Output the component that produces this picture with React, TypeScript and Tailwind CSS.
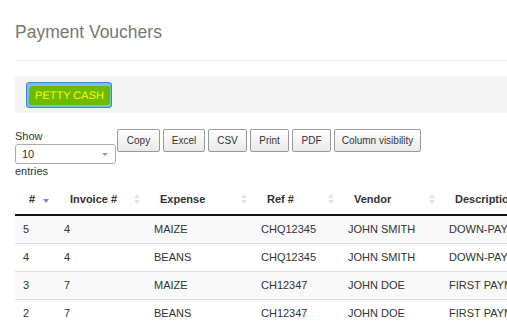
const rows = [
  { id: "5", invoice: "4", expense: "MAIZE", ref: "CHQ12345", vendor: "JOHN SMITH", desc: "DOWN-PAYMENT" },
  { id: "4", invoice: "4", expense: "BEANS", ref: "CHQ12345", vendor: "JOHN SMITH", desc: "DOWN-PAYMENT" },
  { id: "3", invoice: "7", expense: "MAIZE", ref: "CH12347", vendor: "JOHN DOE", desc: "FIRST PAYMENT" },
  { id: "2", invoice: "7", expense: "BEANS", ref: "CH12347", vendor: "JOHN DOE", desc: "FIRST PAYMENT" },
];

const columns = [
  { label: "#", width: "w-[41px]", active: true },
  { label: "Invoice #", width: "w-[90px]" },
  { label: "Expense", width: "w-[107px]" },
  { label: "Ref #", width: "w-[87px]" },
  { label: "Vendor", width: "w-[101px]" },
  { label: "Description", width: "w-[140px]" },
];

const exportButtons = [
  { label: "Copy", width: "w-[43px]" },
  { label: "Excel", width: "w-[42px]" },
  { label: "CSV", width: "w-[39px]" },
  { label: "Print", width: "w-[39px]" },
  { label: "PDF", width: "w-[39px]" },
  { label: "Column visibility", width: "w-[87px]" },
];

function SortIcon({ active }: { active?: boolean }) {
  if (active) {
    return (
      <svg width="6" height="4" viewBox="0 0 6 4" className="absolute right-[7px] top-[14px]">
        <path d="M0 0h6L3 4z" fill="#8088d8" />
      </svg>
    );
  }
  return (
    <svg width="6" height="10" viewBox="0 0 6 10" className="absolute right-[6px] top-[9px]">
      <path d="M0 4L3 0l3 4z" fill="#e2e2e2" />
      <path d="M0 6h6l-3 4z" fill="#e2e2e2" />
    </svg>
  );
}

export default function App() {
  return (
    <div className="w-[507px] h-[321px] overflow-hidden bg-white font-['Liberation_Sans',Arial,sans-serif] text-[#333]">
      <div className="pl-[15px]">
        {/* Title */}
        <h1 className="pt-[22px] text-[17.5px] leading-[20px] text-[#777]">Payment Vouchers</h1>
        <div className="mt-[18px] h-px bg-[#eee]" />

        {/* Action panel */}
        <div className="mt-[15px] h-[37px] bg-[#f4f4f4] pt-[6px] pl-[11px]">
          <button className="flex h-[26px] w-[86px] items-center justify-center rounded-[3px] border border-[#3c86c9] bg-[#74bfee]">
            <span className="rounded-[3px] bg-[#6cbb02] px-[6px] py-[3px] text-[11px] leading-[13px] text-[#f8f800] -skew-x-3">
              PETTY CASH
            </span>
          </button>
        </div>

        {/* Toolbar */}
        <div className="mt-[16px] flex items-start">
          <div className="w-[101px] text-[11px] leading-[13px]">
            <div className="pt-px">Show</div>
            <div className="relative mt-px flex h-[20px] items-center rounded-[3px] border border-[#aaa] bg-white pl-[6px]">
              10
              <svg width="6" height="3" viewBox="0 0 6 3" className="absolute right-[7px] top-[8px]">
                <path d="M0 0h6L3 3z" fill="#999" />
              </svg>
            </div>
            <div className="pt-px">entries</div>
          </div>
          <div className="ml-px flex gap-[3px]">
            {exportButtons.map((b) => (
              <button
                key={b.label}
                className={`${b.width} h-[23px] rounded-[2px] border border-[#999] bg-gradient-to-b from-white to-[#e9e9e9] text-[10px] leading-[12px] text-[#333]`}
              >
                {b.label}
              </button>
            ))}
          </div>
        </div>

        {/* Table */}
        <table className="mt-[7px] w-[566px] table-fixed border-collapse text-[11px]">
          <thead>
            <tr className="h-[30px] border-b-2 border-[#111]">
              {columns.map((c) => (
                <th key={c.label} className={`${c.width} relative whitespace-nowrap pl-[14px] text-left font-bold`}>
                  {c.label}
                  <SortIcon active={c.active} />
                </th>
              ))}
            </tr>
          </thead>
          <tbody>
            {rows.map((r, i) => (
              <tr key={r.id} className={`h-[28px] border-b border-[#ddd] ${i % 2 === 0 ? "bg-[#f9f9f9]" : "bg-white"}`}>
                <td className="pl-[8px]">{r.id}</td>
                <td className="pl-[8px]">{r.invoice}</td>
                <td className="pl-[8px]">{r.expense}</td>
                <td className="pl-[8px]">{r.ref}</td>
                <td className="pl-[8px]">{r.vendor}</td>
                <td className="whitespace-nowrap pl-[8px]">{r.desc}</td>
              </tr>
            ))}
          </tbody>
        </table>
      </div>
    </div>
  );
}
